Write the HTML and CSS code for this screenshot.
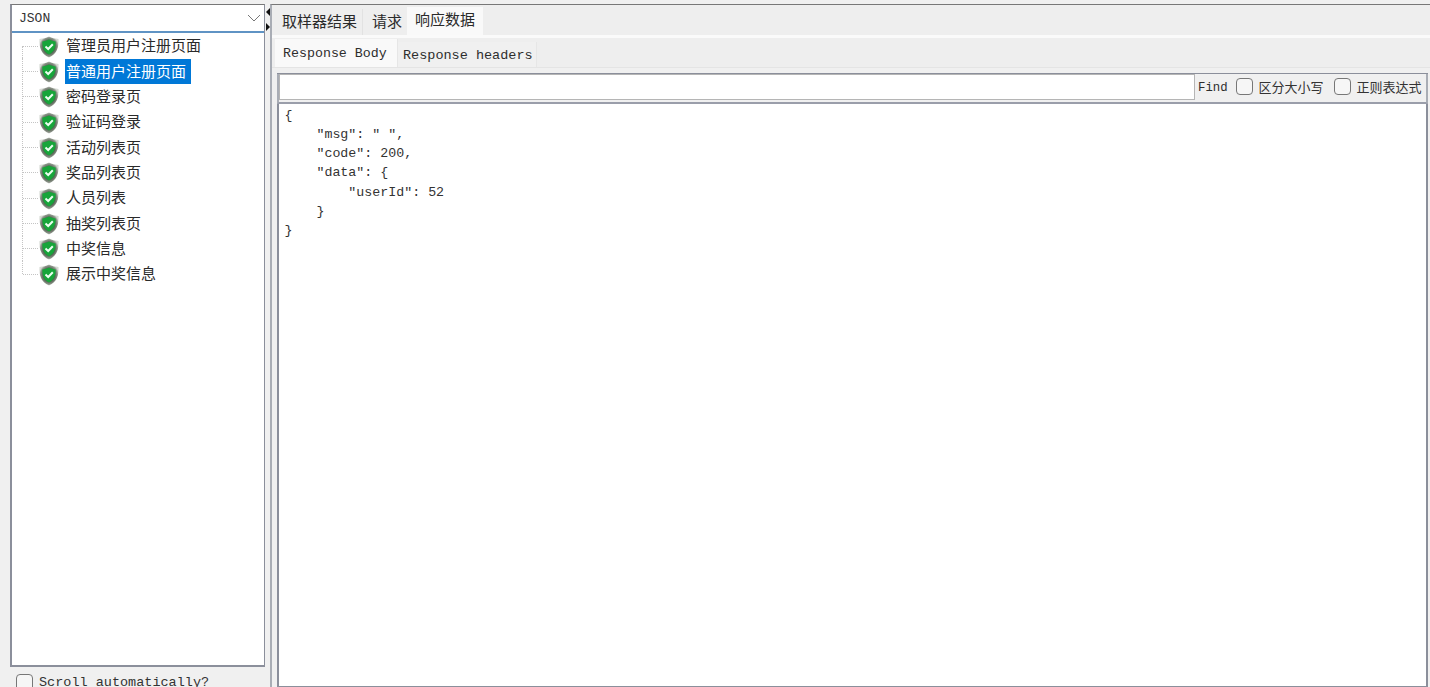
FILE: index.html
```html
<!DOCTYPE html>
<html lang="zh">
<head>
<meta charset="utf-8">
<title>JSON</title>
<link rel="stylesheet" href="styles.css">
</head>
<body>
<svg class="defs" width="0" height="0">
  <defs>
    <radialGradient id="halo" cx="50%" cy="50%" r="52%">
      <stop offset="0.55" stop-color="#4e5a4c"/>
      <stop offset="0.85" stop-color="#8d958a"/>
      <stop offset="1" stop-color="#d5d9d3"/>
    </radialGradient>
    <symbol id="shield" viewBox="0 0 20 22">
      <path d="M10 0.500 C13 2 16 2.500 19.500 3 C20 11 18 18 10 21.500 C2 18 0 11 0.500 3 C4 2.500 7 2 10 0.500Z" fill="url(#halo)"/>
      <path d="M10 3.500 C12.300 4.700 14.500 5.300 16.700 5.500 C16.800 11 15.500 15.800 10 18.500 C4.500 15.800 3.200 11 3.300 5.500 C5.500 5.300 7.700 4.700 10 3.500Z" fill="#17a53a"/>
      <path d="M6.500 10.500 L9.200 13 L13.800 8.200" fill="none" stroke="#eafff0" stroke-width="2"/>
    </symbol>
  </defs>
</svg>
<div class="app">
  <aside class="left">
    <div class="left-box">
      <div class="combo"><span class="combo-text">JSON</span>
        <svg class="chevron" width="14" height="8" viewBox="0 0 14 8"><path d="M1 1 L7 7 L13 1" fill="none" stroke="#777" stroke-width="1"/></svg>
      </div>
      <ul class="tree">
        <li class="node first"><span class="branch"></span><svg class="shield"><use href="#shield"/></svg><span class="label">管理员用户注册页面</span></li>
        <li class="node"><span class="branch"></span><svg class="shield"><use href="#shield"/></svg><span class="label selected">普通用户注册页面</span></li>
        <li class="node"><span class="branch"></span><svg class="shield"><use href="#shield"/></svg><span class="label">密码登录页</span></li>
        <li class="node"><span class="branch"></span><svg class="shield"><use href="#shield"/></svg><span class="label">验证码登录</span></li>
        <li class="node"><span class="branch"></span><svg class="shield"><use href="#shield"/></svg><span class="label">活动列表页</span></li>
        <li class="node"><span class="branch"></span><svg class="shield"><use href="#shield"/></svg><span class="label">奖品列表页</span></li>
        <li class="node"><span class="branch"></span><svg class="shield"><use href="#shield"/></svg><span class="label">人员列表</span></li>
        <li class="node"><span class="branch"></span><svg class="shield"><use href="#shield"/></svg><span class="label">抽奖列表页</span></li>
        <li class="node"><span class="branch"></span><svg class="shield"><use href="#shield"/></svg><span class="label">中奖信息</span></li>
        <li class="node last"><span class="branch"></span><svg class="shield"><use href="#shield"/></svg><span class="label">展示中奖信息</span></li>
      </ul>
    </div>
    <div class="scroll-row"><span class="check"></span><span class="mono scroll-text">Scroll automatically?</span></div>
  </aside>
  <div class="divider"><span class="arrow-left"></span><span class="arrow-right"></span></div>
  <main class="right">
    <div class="tabs">
      <span class="tab">取样器结果</span>
      <span class="tab tab-short">请求</span>
      <span class="tab active">响应数据</span>
    </div>
    <div class="strip"></div>
    <div class="subtabs">
      <span class="subtab mono sub-active">Response Body</span>
      <span class="subtab mono">Response headers</span>
    </div>
    <div class="pane">
      <div class="find-row">
        <div class="find-input"></div>
        <span class="mono find-label">Find</span>
        <span class="check"></span><span class="opt">区分大小写</span>
        <span class="check check-gap"></span><span class="opt">正则表达式</span>
      </div>
      <pre class="body mono">{
    "msg": " ",
    "code": 200,
    "data": {
        "userId": 52
    }
}</pre>
    </div>
  </main>
</div>
</body>
</html>
```
FILE: styles.css
```css
* { box-sizing: border-box; }
html, body { margin: 0; padding: 0; height: 687px; overflow: hidden; background: #f0f0f0; }
body { font-family: "Noto Sans CJK SC", "Liberation Sans", sans-serif; color: #222; }
.defs { display: block; height: 0; }
.mono { font-family: "Liberation Mono", "Noto Sans CJK SC", monospace; }

.app { display: flex; height: 687px; padding: 4px 0 0 10px; }

.left { width: 255px; display: flex; flex-direction: column; flex: none; }
.left-box {
  height: 663px; flex: none; display: flex; flex-direction: column; background: #fff;
  border: 1px solid #8b8f9b; border-top: 1px solid #777; border-left-width: 2px; border-bottom-width: 2px;
}
.combo {
  height: 28px; flex: none; display: flex; align-items: center; justify-content: space-between;
  padding: 0 3px 0 7px; border-bottom: 2px solid #5f93c4; background: #fff;
}
.combo-text { font-family: "Liberation Mono", monospace; font-size: 13px; color: #333; }
.tree { list-style: none; margin: 0; padding: 0; flex: 1; }
.node { height: 25.35px; display: flex; align-items: center; position: relative; font-size: 15px; }
.branch {
  width: 17px; margin-left: 10px; height: 100%; flex: none;
  border-left: 1px dotted #c4c4c4; position: relative;
}
.branch::after {
  content: ""; position: absolute; left: 0; top: 50%; width: 15px; border-top: 1px dotted #c4c4c4;
}
.first .branch { height: 50%; align-self: flex-end; }
.first .branch::after { top: 0; }
.last .branch { height: 50%; align-self: flex-start; }
.last .branch::after { top: 100%; }
.shield { width: 20px; height: 22px; flex: none; margin-right: 6px; margin-top: 2px; }
.label { height: 25px; line-height: 24px; padding: 0 5px 0 1px; color: #2a2a2a; white-space: nowrap; }
.selected { background: #0078d7; color: #fff; }

.scroll-row { display: flex; align-items: center; height: 24px; flex: none; padding: 6px 0 0 6px; gap: 6px; }
.scroll-text { font-size: 13.500px; color: #333; }
.check {
  display: inline-block; width: 17px; height: 17px; flex: none;
  border: 1px solid #777; border-radius: 4px; background: #f6f6f6;
}

.divider {
  width: 5px; flex: none; display: flex; flex-direction: column; align-items: center;
  gap: 7px; padding-top: 4px;
}
.arrow-left { border: 4px solid transparent; border-left-width: 0; border-right-color: #111; }
.arrow-right { border: 4px solid transparent; border-right-width: 0; border-left-color: #111; }

.right {
  flex: 1; min-width: 0; display: flex; flex-direction: column;
  border-top: 1px solid #777; border-left: 2px solid #a9adb5;
}
.tabs { height: 30px; flex: none; display: flex; align-items: flex-end; padding-left: 3px; background: #eeeeee; }
.tab {
  height: 26px; display: flex; align-items: center; padding: 0 5px 3px 7px; font-size: 15px;
  color: #2a2a2a; border-right: 1px solid #e2e2e2; white-space: nowrap;
}
.tab-short { padding: 0 5px 3px 9px; border-right: 0; }
.tab.active { height: 28px; padding: 0 8px 5px 8px; background: #f9f9f9; border-right: 0; }
.strip { height: 3px; flex: none; background: #fafafa; }
.subtabs {
  height: 30px; flex: none; display: flex; align-items: flex-end; padding-left: 3px;
  background: #eeeeee; border-bottom: 1px solid #e4e4e4;
}
.subtab {
  height: 25px; display: flex; align-items: center; padding: 2px 3px 0 5px; font-size: 13.500px;
  color: #2d2d2d; background: #f0f0f0; border-right: 1px solid #e6e6e6;
}
.subtab.sub-active { height: 28px; width: 123px; padding: 0 0 0 8px; background: #f9f9f9; font-size: 13.300px; }

.pane {
  flex: 1; min-height: 0; margin: 5px 0 0 5px; width: 1151px; display: flex; flex-direction: column;
  border-top: 1px solid #8b8f9b;
}
.find-row {
  height: 30px; flex: none; display: flex; align-items: center; padding: 0 0 3px 2px;
  background: #f0f0f0; border-left: 2px solid #a9adb5; border-right: 2px solid #a9adb5;
  border-bottom: 2px solid #9a9eaa;
}
.find-input { width: 916px; height: 26px; background: #fff; border: 1px solid #b5b5b5; flex: none; margin-left: -2px; }
.find-label { font-size: 12.300px; margin: 2px 0 0 3px; color: #2d2d2d; }
.find-row .check { margin-left: 8px; }
.find-row .check-gap { margin-left: 10px; }
.opt { font-size: 13px; margin-left: 6px; color: #333; white-space: nowrap; }

.body {
  flex: 1; margin: 0; padding: 2px 0 0 5.500px; background: #fff; font-size: 13.300px; line-height: 19.150px;
  color: #333; border-left: 2px solid #8b8f9b; border-right: 2px solid #8b8f9b; border-bottom: 1px solid #8b8f9b;
}
```
